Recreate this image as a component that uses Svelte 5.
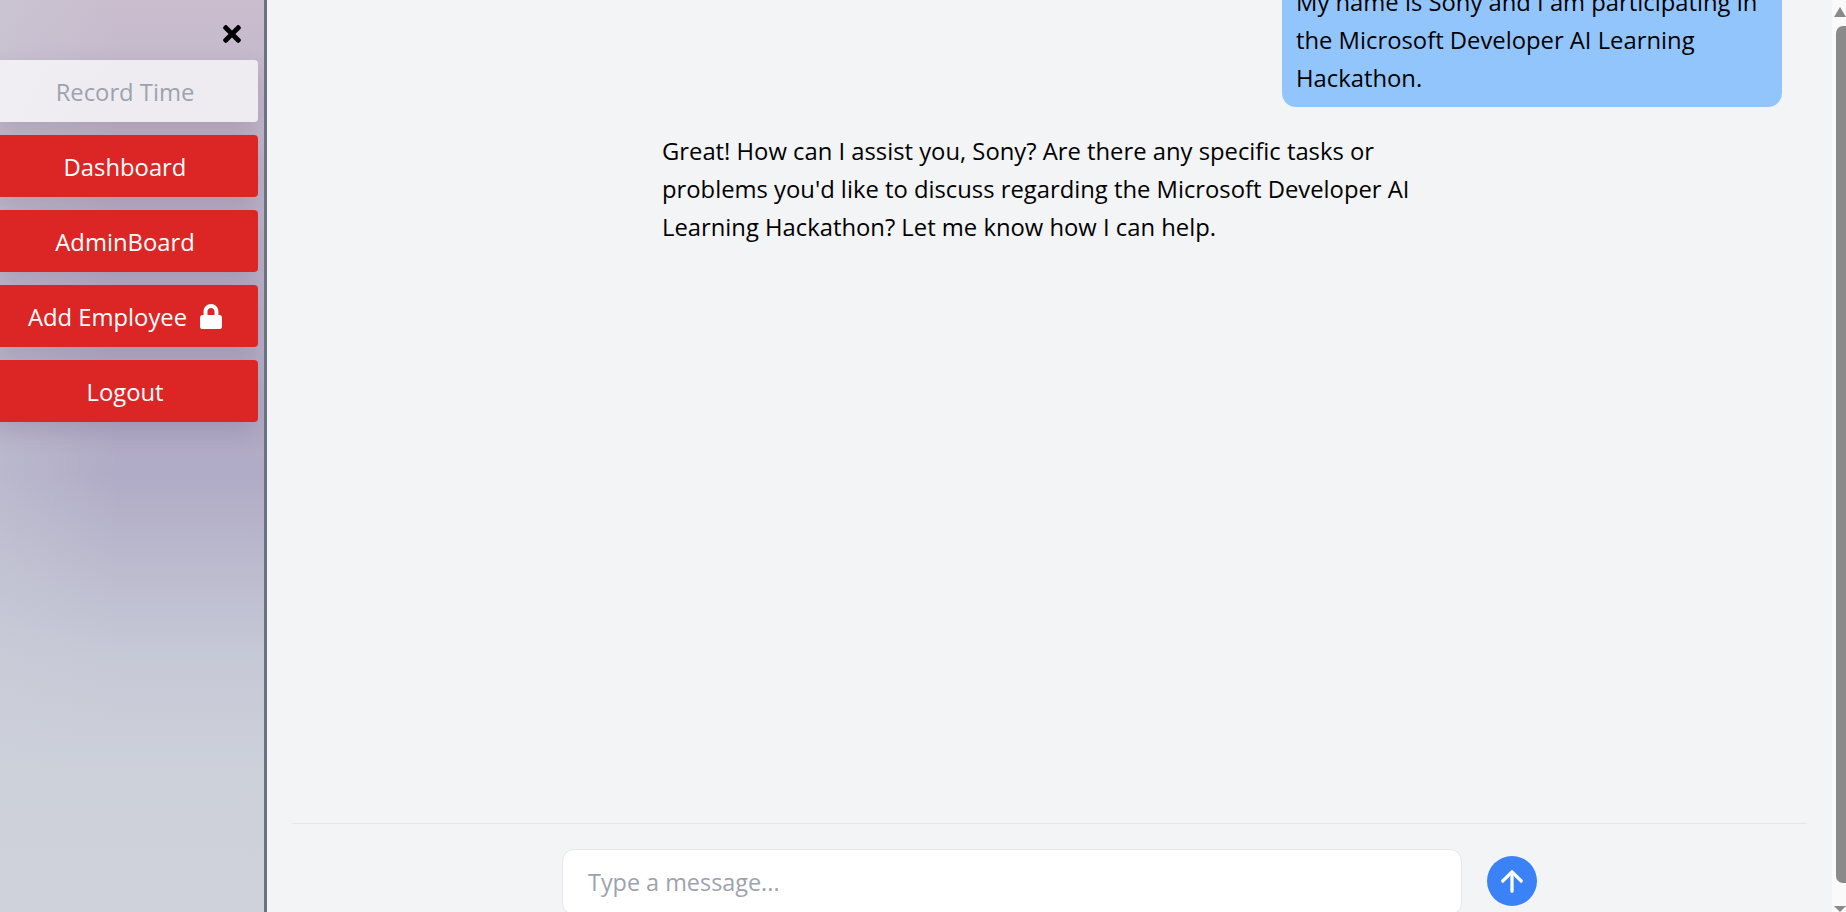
<script>
	let draft = $state("");

	const links = [
		{ label: "Dashboard" },
		{ label: "AdminBoard" },
		{ label: "Add Employee", locked: true },
		{ label: "Logout" }
	];
</script>

<div class="page">
	<aside class="sidebar">
		<button class="close" aria-label="Close menu">
			<svg viewBox="0 0 352 512" width="18" height="26" fill="currentColor">
				<path d="M242.72 256l100.07-100.07c12.28-12.28 12.28-32.19 0-44.48l-22.24-22.24c-12.28-12.28-32.19-12.28-44.48 0L176 189.28 75.93 89.21c-12.28-12.28-32.19-12.28-44.48 0L9.21 111.45c-12.28 12.28-12.28 32.19 0 44.48L109.28 256 9.21 356.07c-12.28 12.28-12.28 32.19 0 44.48l22.24 22.24c12.28 12.28 32.2 12.28 44.48 0L176 322.72l100.07 100.07c12.28 12.28 32.2 12.28 44.48 0l22.24-22.24c12.28-12.28 12.28-32.19 0-44.48L242.72 256z" />
			</svg>
		</button>
		<button class="nav-btn record" disabled>Record Time</button>
		{#each links as link}
			<button class="nav-btn">
				{link.label}
				{#if link.locked}
					<svg class="lock" viewBox="0 0 448 512" width="22" height="25" fill="currentColor">
						<path d="M400 224h-24v-72C376 68.2 307.8 0 224 0S72 68.2 72 152v72H48c-26.5 0-48 21.5-48 48v192c0 26.5 21.5 48 48 48h352c26.5 0 48-21.5 48-48V272c0-26.5-21.5-48-48-48zm-104 0H152v-72c0-39.7 32.3-72 72-72s72 32.3 72 72v72z" />
					</svg>
				{/if}
			</button>
		{/each}
	</aside>

	<main class="chat">
		<div class="messages">
			<div class="bubble">
				My name is Sony and I am participating in the Microsoft Developer AI Learning Hackathon.
			</div>
			<div class="reply">
				Great! How can I assist you, Sony? Are there any specific tasks or problems you'd like to discuss regarding the Microsoft Developer AI Learning Hackathon? Let me know how I can help.
			</div>
		</div>
		<form class="composer" onsubmit={(e) => e.preventDefault()}>
			<input type="text" placeholder="Type a message..." bind:value={draft} />
			<button class="send" aria-label="Send">
				<svg viewBox="0 0 24 24" width="26" height="26" fill="none" stroke="currentColor" stroke-width="3" stroke-linecap="round" stroke-linejoin="round">
					<path d="M12 21.5V4" />
					<path d="M3.5 12 12 3.5l8.5 8.5" />
				</svg>
			</button>
		</form>
	</main>

	<div class="scrollbar">
		<span class="arrow up"></span>
		<span class="thumb"></span>
		<span class="arrow down"></span>
	</div>
</div>

<style>
	:global(body) {
		margin: 0;
		overflow: hidden;
	}

	.page {
		display: flex;
		height: 912px;
		overflow: hidden;
		font-family: "Open Sans", "Noto Sans", sans-serif;
		font-size: 23.8px;
		background: #f3f4f6;
		color: #000;
	}

	.sidebar {
		box-sizing: border-box;
		width: 267px;
		flex: none;
		border-right: 3px solid #6b7280;
		padding: 0 6px 0 0;
		display: flex;
		flex-direction: column;
		gap: 13px;
		overflow: hidden;
		background:
			linear-gradient(90deg, rgba(205, 209, 218, 0.35), rgba(205, 209, 218, 0) 45%),
			linear-gradient(180deg, #c9bdce 0%, #bdb3c8 20%, #b0abc6 52%, #c6c9d6 72%, #cdd1da 85%, #cfd2db 100%);
	}

	.close {
		align-self: flex-end;
		margin: 21px 17px 0 0;
		padding: 0;
		height: 26px;
		background: none;
		border: 0;
		color: #000;
	}

	.nav-btn {
		box-sizing: border-box;
		flex: none;
		width: 266px;
		height: 62px;
		margin-left: -8px;
		padding: 1px 0 0;
		display: flex;
		align-items: center;
		justify-content: center;
		gap: 13px;
		border: 0;
		border-radius: 4px;
		background: #dc2626;
		color: #fff;
		font: inherit;
		box-shadow: 0 10px 25px rgba(60, 30, 80, 0.16);
	}

	.record {
		background: rgba(255, 255, 255, 0.73);
		color: #9ca3af;
	}

	.lock {
		flex: none;
	}

	.chat {
		flex: 1;
		min-width: 0;
		padding: 0 25px;
		display: flex;
		flex-direction: column;
	}

	.messages {
		flex: 1;
		min-height: 0;
		margin-top: -27px;
		line-height: 38px;
		display: flex;
		flex-direction: column;
	}

	.bubble {
		box-sizing: border-box;
		align-self: flex-end;
		width: 500px;
		margin-right: 25px;
		padding: 10px 14px;
		background: #93c5fd;
		border-radius: 0 0 14px 14px;
	}

	.reply {
		width: 770px;
		margin: 25px 0 0 370px;
	}

	.composer {
		flex: none;
		height: 89px;
		border-top: 1px solid #e5e7eb;
		padding-top: 25px;
		box-sizing: border-box;
		display: flex;
		align-items: flex-start;
		gap: 25px;
		padding-left: 270px;
	}

	input {
		box-sizing: border-box;
		width: 900px;
		height: 66px;
		flex: none;
		padding: 0 25px;
		border: 1px solid #e5e7eb;
		border-radius: 12px;
		background: #fff;
		font: inherit;
		font-size: 23.4px;
		outline: none;
	}

	input::placeholder {
		color: #9ca3af;
	}

	.send {
		width: 50px;
		height: 50px;
		margin-top: 7px;
		flex: none;
		padding: 0;
		border: 0;
		border-radius: 50%;
		background: #3b82f6;
		color: #fff;
		display: flex;
		align-items: center;
		justify-content: center;
	}

	.scrollbar {
		width: 14px;
		flex: none;
		background: #fafafa;
		display: flex;
		flex-direction: column;
		align-items: flex-end;
	}

	.thumb {
		flex: 1;
		width: 10px;
		margin: 9px 0 23px;
		background: #8a8a8a;
		border-radius: 7px 0 0 7px;
	}

	.arrow {
		width: 0;
		height: 0;
		border-left: 6px solid transparent;
		border-right: 6px solid transparent;
	}

	.arrow.up {
		margin-top: 7px;
		border-bottom: 10px solid #8a8a8a;
	}

	.arrow.down {
		border-top: 6px solid #8a8a8a;
	}
</style>
